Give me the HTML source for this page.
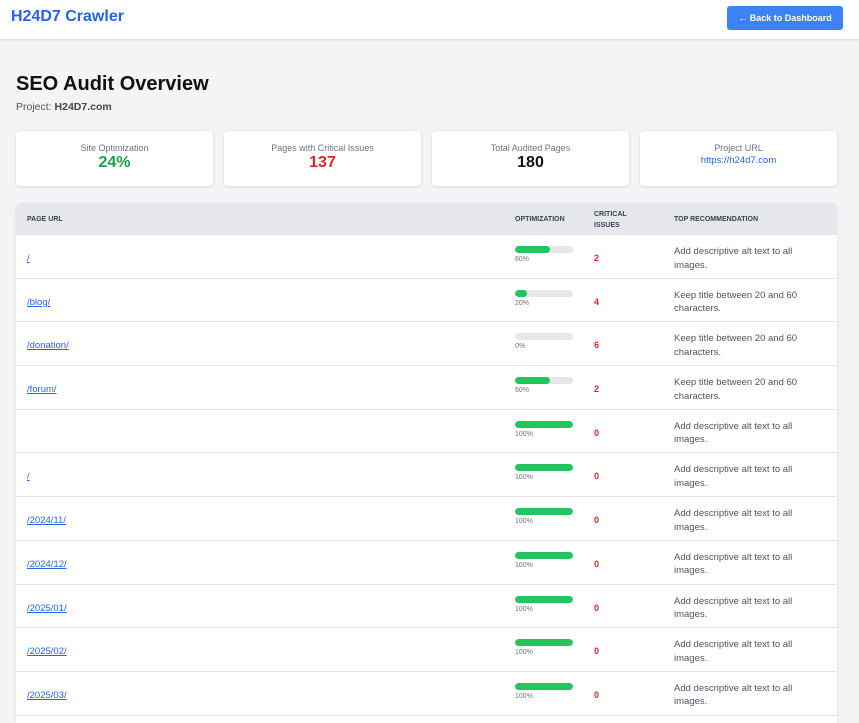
<!DOCTYPE html>
<html><head><meta charset="utf-8"><style>
*{margin:0;padding:0;box-sizing:border-box}
body{width:859px;height:716px;overflow:hidden;background:#f3f4f6;font-family:"Liberation Sans",sans-serif;position:relative}
.hdr{position:absolute;left:0;top:0;width:859px;height:40px;background:#fff;border-bottom:1px solid #e0e0e0;box-shadow:0 1px 2px rgba(0,0,0,.06)}
.logo{position:absolute;left:11px;top:8px;font-size:16px;font-weight:bold;color:#2563eb}
.btn{position:absolute;left:727px;top:6px;width:116px;height:24px;background:#3b82f6;border-radius:3px;color:#fff;font-size:9px;font-weight:bold;text-align:center;line-height:24px}
h1{position:absolute;left:16px;top:73px;font-size:20px;font-weight:bold;color:#111}
.proj{position:absolute;left:16px;top:101px;font-size:10.5px;color:#555}
.proj b{color:#444}
.card{position:absolute;top:131px;width:197px;height:55px;background:#fff;border-radius:4px;box-shadow:0 1px 3px rgba(0,0,0,.12);text-align:center}
.card .l{margin-top:12px;font-size:9px;color:#6b7280}
.card .v{font-size:16px;font-weight:bold;margin-top:1px}
.tbl{position:absolute;left:16px;top:203px;width:821px;height:520px;background:#fff;border-radius:5px 5px 0 0;box-shadow:0 1px 3px rgba(0,0,0,.1);overflow:hidden}
.th{height:32px;background:#e5e7eb;position:relative;font-size:7px;font-weight:bold;color:#374151}
.th span{position:absolute}
.row{height:43.7px;border-bottom:1px solid #e5e7eb;position:relative;font-size:9.5px}
.row .u{position:absolute;left:11px;top:18px;color:#2563eb;text-decoration:underline;font-size:9.5px}
.bar{position:absolute;left:499px;top:11px;width:58px;height:7px;background:#e5e7eb;border-radius:4px;overflow:hidden}
.bar i{display:block;height:100%;background:#22c55e;border-radius:4px}
.pc{position:absolute;left:499px;top:21px;font-size:7px;color:#6b7280}
.c{position:absolute;left:578px;top:18px;font-size:9px;font-weight:bold;color:#dc2626}
.r{position:absolute;left:658px;top:10px;width:140px;font-size:9.5px;line-height:13.5px;color:#4b5563}
</style></head><body>
<div class="hdr"><div class="logo">H24D7 Crawler</div><div class="btn">← Back to Dashboard</div></div>
<h1>SEO Audit Overview</h1>
<div class="proj">Project: <b>H24D7.com</b></div>
<div class="card" style="left:16px"><div class="l">Site Optimization</div><div class="v" style="color:#16a34a">24%</div></div>
<div class="card" style="left:224px"><div class="l">Pages with Critical Issues</div><div class="v" style="color:#dc2626">137</div></div>
<div class="card" style="left:432px"><div class="l">Total Audited Pages</div><div class="v" style="color:#111">180</div></div>
<div class="card" style="left:640px"><div class="l">Project URL</div><div style="font-size:9.5px;color:#2563eb;margin-top:2px">https://h24d7.com</div></div>
<div class="tbl">
<div class="th"><span style="left:11px;top:13px">PAGE URL</span><span style="left:499px;top:13px">OPTIMIZATION</span><span style="left:578px;top:6px;line-height:11px">CRITICAL<br>ISSUES</span><span style="left:658px;top:13px">TOP RECOMMENDATION</span></div>
<div class="row"><span class="u">/</span><div class="bar"><i style="width:60%"></i></div><div class="pc">60%</div><div class="c">2</div><div class="r">Add descriptive alt text to all images.</div></div>
<div class="row"><span class="u">/blog/</span><div class="bar"><i style="width:20%"></i></div><div class="pc">20%</div><div class="c">4</div><div class="r">Keep title between 20 and 60 characters.</div></div>
<div class="row"><span class="u">/donation/</span><div class="bar"><i style="width:0%"></i></div><div class="pc">0%</div><div class="c">6</div><div class="r">Keep title between 20 and 60 characters.</div></div>
<div class="row"><span class="u">/forum/</span><div class="bar"><i style="width:60%"></i></div><div class="pc">60%</div><div class="c">2</div><div class="r">Keep title between 20 and 60 characters.</div></div>
<div class="row"><div class="bar"><i style="width:100%"></i></div><div class="pc">100%</div><div class="c">0</div><div class="r">Add descriptive alt text to all images.</div></div>
<div class="row"><span class="u">/</span><div class="bar"><i style="width:100%"></i></div><div class="pc">100%</div><div class="c">0</div><div class="r">Add descriptive alt text to all images.</div></div>
<div class="row"><span class="u">/2024/11/</span><div class="bar"><i style="width:100%"></i></div><div class="pc">100%</div><div class="c">0</div><div class="r">Add descriptive alt text to all images.</div></div>
<div class="row"><span class="u">/2024/12/</span><div class="bar"><i style="width:100%"></i></div><div class="pc">100%</div><div class="c">0</div><div class="r">Add descriptive alt text to all images.</div></div>
<div class="row"><span class="u">/2025/01/</span><div class="bar"><i style="width:100%"></i></div><div class="pc">100%</div><div class="c">0</div><div class="r">Add descriptive alt text to all images.</div></div>
<div class="row"><span class="u">/2025/02/</span><div class="bar"><i style="width:100%"></i></div><div class="pc">100%</div><div class="c">0</div><div class="r">Add descriptive alt text to all images.</div></div>
<div class="row"><span class="u">/2025/03/</span><div class="bar"><i style="width:100%"></i></div><div class="pc">100%</div><div class="c">0</div><div class="r">Add descriptive alt text to all images.</div></div>
</div>
</body></html>
